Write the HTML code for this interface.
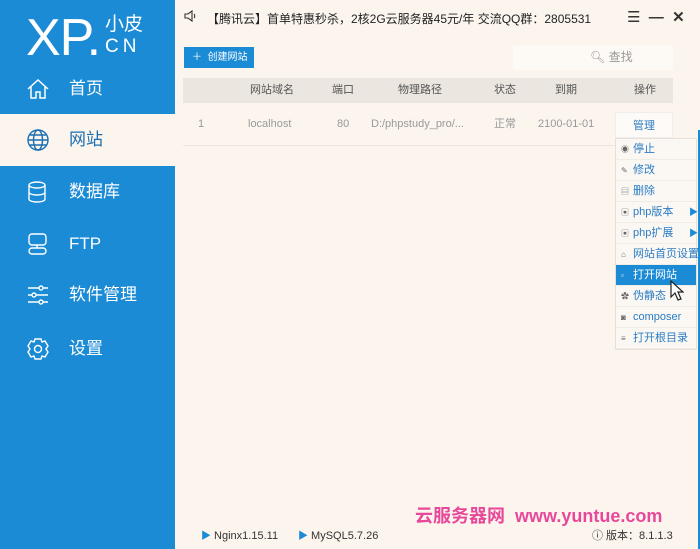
<!DOCTYPE html>
<html><head><meta charset="utf-8"><style>
*{margin:0;padding:0;box-sizing:border-box}
body{width:700px;height:549px;overflow:hidden;background:#fbf5ee;font-family:"Liberation Sans","Noto Sans CJK SC",sans-serif;position:relative}
.side{position:absolute;left:0;top:0;width:175px;height:549px;background:#1b8bd6}
.logo{position:absolute;left:26px;top:8px;color:#fff;font-size:52px;letter-spacing:-1px}
.logo2{position:absolute;left:105px;top:14px;color:#fff;font-size:19px;line-height:22px}
.nav{position:absolute;left:0;width:175px;height:52px;color:#fff;font-size:17px;line-height:52px}
.nav span{position:absolute;left:69px}
.nav svg{position:absolute;left:26px;top:14px}
.active{background:#fbf5ee;color:#1b6fb0}
.top{position:absolute;left:207px;top:10px;font-size:12px;color:#222}
.btn{position:absolute;left:184px;top:47px;width:70px;height:21px;background:#1b8bd6;color:#fff;font-size:10px;line-height:21px;padding-left:8px}
.search{position:absolute;left:513px;top:45px;width:160px;height:25px;background:#fdfaf6;color:#999;font-size:12px;line-height:25px;padding-left:77px}
.th{position:absolute;left:183px;top:78px;width:490px;height:25px;background:#ebe6df;font-size:11px;color:#555;line-height:25px}
.tr{position:absolute;left:183px;top:103px;width:490px;height:43px;border-bottom:1px solid #ece6df;font-size:11px;color:#999;line-height:43px}
.c{position:absolute;white-space:nowrap}
.menu{position:absolute;left:615px;top:138px;width:82px;background:#fbf8f4;border:1px solid #e6e0d8}
.mi{height:21px;font-size:11px;color:#2a7cc4;line-height:21px;padding-left:17px;position:relative;border-bottom:1px solid #f0ebe4;white-space:nowrap}
.mi i{position:absolute;left:5px;top:0;font-style:normal;color:#666;font-size:8px}
.hl{background:#1b8bd6;color:#fff}
.foot{position:absolute;top:527px;font-size:11px;color:#333}
.tri{color:#1b8bd6;font-size:10px}
</style></head><body>
<div class="side">
<div class="logo">XP.</div>
<div class="logo2">小皮<br><span style="letter-spacing:4px">CN</span></div>
<div class="nav" style="top:63px"><svg width="24" height="24" viewBox="0 0 24 24" fill="none" stroke="#fff" stroke-width="1.5"><path d="M2 12L12 3l10 9M5 10v11h5v-6h4v6h5V10"/></svg><span>首页</span></div>
<div class="nav active" style="top:114px"><svg width="24" height="24" viewBox="0 0 24 24" fill="none" stroke="#1b6fb0" stroke-width="1.4"><circle cx="12" cy="12" r="10"/><ellipse cx="12" cy="12" rx="4.5" ry="10"/><path d="M2 12h20M4 7h16M4 17h16"/></svg><span>网站</span></div>
<div class="nav" style="top:166px"><svg width="24" height="24" viewBox="0 0 24 24" fill="none" stroke="#fff" stroke-width="1.4"><ellipse cx="11" cy="5" rx="8" ry="3"/><path d="M3 5v14c0 2 4 3 8 3s8-1 8-3V5M3 12c0 2 4 3 8 3s8-1 8-3"/></svg><span>数据库</span></div>
<div class="nav" style="top:218px"><svg width="24" height="24" viewBox="0 0 24 24" fill="none" stroke="#fff" stroke-width="1.4"><rect x="3" y="2" width="17" height="11" rx="3"/><path d="M11 13v3"/><rect x="3" y="16" width="17" height="6" rx="3"/></svg><span>FTP</span></div>
<div class="nav" style="top:269px"><svg width="24" height="24" viewBox="0 0 24 24" fill="none" stroke="#fff" stroke-width="1.4"><path d="M2 5h20M2 12h20M2 19h20"/><circle cx="15" cy="5" r="2" fill="#1b8bd6"/><circle cx="8" cy="12" r="2" fill="#1b8bd6"/><circle cx="15" cy="19" r="2" fill="#1b8bd6"/></svg><span>软件管理</span></div>
<div class="nav" style="top:323px"><svg width="24" height="24" viewBox="0 0 24 24" fill="none" stroke="#fff" stroke-width="1.4"><path d="M9 2h6l1 3 3-1 3 5-2 3 2 3-3 5-3-1-1 3H9l-1-3-3 1-3-5 2-3-2-3 3-5 3 1z"/><circle cx="12" cy="12" r="3.5"/></svg><span>设置</span></div>
</div>
<div style="position:absolute;right:0;top:130px;width:2px;height:419px;background:#1b8bd6"></div>
<svg style="position:absolute;left:184px;top:9px" width="14" height="14" viewBox="0 0 14 14" fill="none" stroke="#333" stroke-width="1.1"><path d="M1 5h3l4-3v10l-4-3H1z"/><path d="M10 5c1 1 1 3 0 4"/></svg>
<div class="top">【腾讯云】首单特惠秒杀，2核2G云服务器45元/年 交流QQ群：2805531</div>
<div style="position:absolute;left:627px;top:8px;font-size:15px;color:#333">☰ &nbsp;<b>—</b>&nbsp; <b>✕</b></div>
<div class="btn">＋ &nbsp;创建网站</div>
<div class="search">🔍︎ 查找</div>
<div class="th"><span class="c" style="left:67px">网站域名</span><span class="c" style="left:149px">端口</span><span class="c" style="left:215px">物理路径</span><span class="c" style="left:311px">状态</span><span class="c" style="left:372px">到期</span><span class="c" style="left:451px">操作</span></div>
<div class="tr"><span class="c" style="left:15px">1</span><span class="c" style="left:65px">localhost</span><span class="c" style="left:154px">80</span><span class="c" style="left:188px">D:/phpstudy_pro/...</span><span class="c" style="left:311px">正常</span><span class="c" style="left:355px">2100-01-01</span><span class="c" style="left:432px;top:9px;width:58px;height:26px;line-height:26px;background:#fdfaf7;color:#2a7cc4;text-align:center;border:1px solid #eee">管理</span></div>
<div class="menu">
<div class="mi"><i>◉</i>停止</div>
<div class="mi"><i>✎</i>修改</div>
<div class="mi"><i>▤</i>删除</div>
<div class="mi"><i>▣</i>php版本<span style="position:absolute;right:-2px;color:#1b8bd6;font-size:9px">▶</span></div>
<div class="mi"><i>▣</i>php扩展<span style="position:absolute;right:-2px;color:#1b8bd6;font-size:9px">▶</span></div>
<div class="mi"><i>⌂</i>网站首页设置</div>
<div class="mi hl"><i style="color:#fff">▫</i>打开网站</div>
<div class="mi"><i>✿</i>伪静态</div>
<div class="mi"><i>◙</i>composer</div>
<div class="mi"><i>≡</i>打开根目录</div>
</div>
<svg style="position:absolute;left:670px;top:280px" width="14" height="22" viewBox="0 0 14 22"><path d="M1 1v16l4-4 3 7 3-1-3-7h5z" fill="#fff" stroke="#222" stroke-width="1.2"/></svg>
<div style="position:absolute;left:415px;top:502px;font-size:18px;font-weight:bold;color:#e8489a;white-space:nowrap">云服务器网 &nbsp;www.yuntue.com</div>
<div class="foot" style="left:201px"><span class="tri">▶</span> Nginx1.15.11</div>
<div class="foot" style="left:298px"><span class="tri">▶</span> MySQL5.7.26</div>
<div class="foot" style="left:592px">ⓘ 版本：8.1.1.3</div>
</body></html>
